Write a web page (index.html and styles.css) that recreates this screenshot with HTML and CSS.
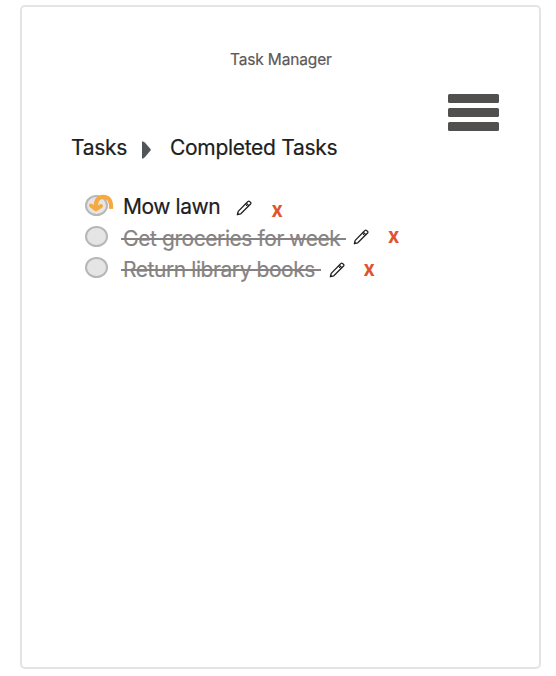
FILE: index.html
```
<!DOCTYPE html>
<html lang="en">
<head>
<meta charset="utf-8">
<title>Task Manager</title>
<link rel="stylesheet" href="styles.css">
</head>
<body>
<svg class="defs" width="0" height="0" aria-hidden="true">
  <symbol id="pencil" viewBox="0 0 16 16">
    <path d="M1.4 14.6L2.2 11.4L10.2 3.2L12.8 5.8L4.8 13.8ZM10.2 3.2L12 1.4Q12.8.8 13.5 1.4L14.6 2.5Q15.2 3.3 14.6 4L12.8 5.8" fill="none" stroke="#222" stroke-width="1.3" stroke-linejoin="round"/>
    <path d="M.8 15.2L1.6 12.5L3.5 14.4Z" fill="#222"/>
    <path d="M9.2 4.2L11.8 6.8" stroke="#222"/>
  </symbol>
</svg>
<main class="card">
  <h1 class="title">Task Manager</h1>
  <button class="menu" aria-label="Menu"><span></span><span></span><span></span></button>
  <nav class="nav">
    <a class="tab tab-tasks">Tasks</a>
    <svg class="arrow" width="9" height="18" viewBox="0 0 9 18"><path d="M0 1.2Q0 0 1 .4L2.8 1.5L8.5 8Q9 8.8 8.5 9.5L2.8 16.3L1 17.5Q0 18 0 16.8Z" fill="#50555a"/></svg>
    <a class="tab tab-completed">Completed Tasks</a>
  </nav>
  <ul class="tasks">
    <li class="task">
      <span class="check">
        <svg class="undo" width="28" height="22" viewBox="0 0 28 22"><path d="M10 15C9 7 12 2.8 17.3 2.8C22.5 2.8 25.4 6 25 14.8" fill="none" stroke="#f5a941" stroke-width="4.2"/><path d="M5 11.5L9.8 15.3L15 12" fill="none" stroke="#f5a941" stroke-width="4" stroke-linecap="round" stroke-linejoin="round"/></svg>
      </span>
      <span class="label label-mow">Mow lawn</span>
      <svg class="edit" width="16" height="16"><use href="#pencil"/></svg>
      <button class="remove">x</button>
    </li>
    <li class="task done">
      <span class="check"></span>
      <span class="label label-groceries">Get groceries for week</span>
      <svg class="edit" width="16" height="16"><use href="#pencil"/></svg>
      <button class="remove">x</button>
    </li>
    <li class="task done last">
      <span class="check"></span>
      <span class="label label-library">Return library books</span>
      <svg class="edit" width="16" height="16"><use href="#pencil"/></svg>
      <button class="remove">x</button>
    </li>
  </ul>
</main>
</body>
</html>
```
FILE: styles.css
```
* { box-sizing: border-box; }
body { margin: 0; background: #fff; font-family: Inter, "Liberation Sans", sans-serif; color: #202020; }
button { padding: 0; border: 0; background: none; font: inherit; }
.defs { display: block; }
.card { width: 521px; height: 664px; margin: 5px 0 0 20px; border: 2px solid #e4e4e4; border-radius: 5px; display: flex; flex-direction: column; align-items: flex-start; }
.title { margin: 43px 0 0 208px; font-size: 15.5px; line-height: 20px; font-weight: 400; letter-spacing: -0.15px; color: #5c5958; white-space: nowrap; -webkit-text-stroke: 0.2px; }
.menu { margin: 24px 0 0 426px; width: 51px; height: 37px; display: flex; flex-direction: column; justify-content: space-between; }
.menu span { display: block; height: 9px; background: #52504e; border-radius: 1.5px; }
.nav { display: flex; align-items: flex-start; margin: 4px 0 0 49px; height: 28px; }
.tab { font-size: 21px; line-height: 26px; letter-spacing: -0.3px; white-space: nowrap; -webkit-text-stroke: 0.2px; }
.tab-tasks { width: 71px; }
.arrow { margin-top: 6px; }
.tab-completed { margin-left: 19px; }
.tasks { list-style: none; margin: 31px 0 0 62.5px; padding: 0; }
.task { display: flex; height: 31px; }
.check { position: relative; width: 23.5px; height: 21.5px; margin: 0.5px 15px 0 0; border: 2px solid #b7b7b7; border-radius: 50%; background: #e5e5e5; flex: none; }
.undo { position: absolute; left: -1px; top: -3px; }
.label { height: 26px; font-size: 21px; line-height: 26px; letter-spacing: -0.43px; white-space: nowrap; -webkit-text-stroke: 0.2px; }
.label-mow { width: 112.5px; }
.label-groceries { width: 230px; }
.label-library { width: 205.5px; }
.edit { margin-top: 6px; flex: none; }
.remove { height: 26px; margin: 2px 0 0 20px; font-size: 19.5px; line-height: 26px; font-weight: 700; color: #df5330; transform: scaleY(1.14); }
.done .label { position: relative; margin-top: 1px; color: #868281; }
.done .label::after { content: ""; position: absolute; left: -2px; right: 7.5px; top: 12px; height: 2px; background: #868281; }
.done .edit { margin-top: 4px; }
.done .remove { margin: -3px 0 0 19px; }
.last .edit { margin-top: 6px; }
.last .remove { margin-top: -1px; }
```
